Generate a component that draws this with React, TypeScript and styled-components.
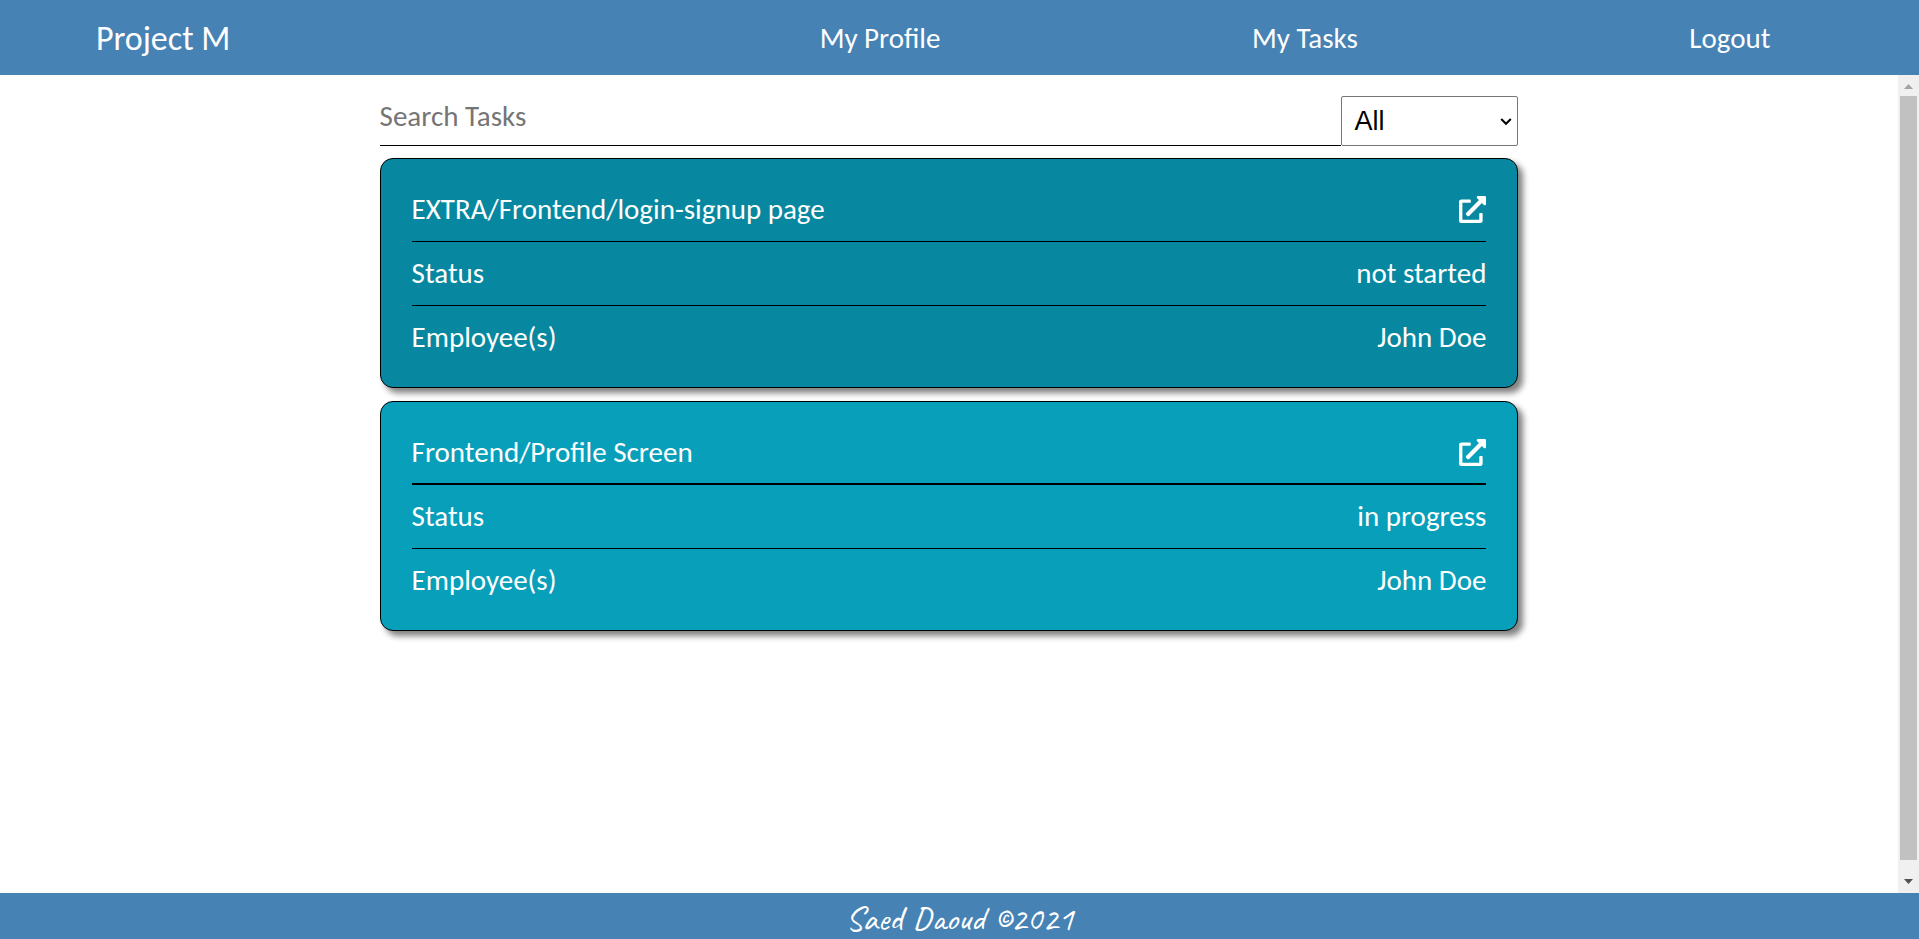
import React from 'react';
import styled, { createGlobalStyle } from 'styled-components';
import { FaExternalLinkAlt } from 'react-icons/fa';

const GlobalStyle = createGlobalStyle`
  *, *::before, *::after { box-sizing: border-box; }
  body {
    margin: 0;
    font-family: "Carlito", "Lato", sans-serif;
    font-size: 29px;
    background: #fff;
  }
`;

const Page = styled.div`
  display: flex;
  flex-direction: column;
  height: 100vh;
`;

const Header = styled.header`
  display: flex;
  flex: none;
  align-items: center;
  justify-content: space-between;
  height: 75px;
  padding: 0 5%;
  background: steelblue;
  color: #fff;
`;

const Brand = styled.a`
  padding-top: 2px;
  color: inherit;
  font-size: 34px;
  line-height: 40px;
  text-decoration: none;
`;

const NavList = styled.ul`
  display: flex;
  justify-content: space-between;
  width: 60%;
  margin: 0;
  padding: 0;
  list-style: none;
`;

const NavItem = styled.li`
  width: 18%;
  text-align: center;
`;

const NavLink = styled.a`
  color: inherit;
  line-height: 40px;
  text-decoration: none;
`;

const Body = styled.div`
  display: flex;
  flex: 1;
  min-height: 0;
`;

const Main = styled.main`
  flex: 1;
  padding-top: 21px;
  overflow: hidden;
`;

const Content = styled.div`
  width: 60%;
  margin: 0 auto;
`;

const SearchBar = styled.form`
  display: flex;
  height: 50px;
  margin-bottom: 12px;
`;

const SearchInput = styled.input`
  flex: 1;
  min-width: 0;
  padding: 0 0 10px;
  border: 0;
  border-bottom: 1px solid #000;
  outline: 0;
  background: transparent;
  font: inherit;

  &::placeholder { color: #757575; }
`;

const SelectWrap = styled.div`
  position: relative;
  display: flex;
  flex: none;
  width: 177px;
`;

const StatusSelect = styled.select`
  flex: 1;
  padding: 0 0 0 12px;
  appearance: none;
  border: 1px solid #767676;
  border-radius: 2px;
  background: #fff;
  color: #000;
  font-family: "Liberation Sans", Arial, sans-serif;
  font-size: 27px;
`;

const SelectChevron = styled.svg`
  position: absolute;
  top: 21px;
  right: 6px;
  width: 12px;
  height: 9px;
  pointer-events: none;
`;

const TaskList = styled.div`
  display: flex;
  flex-direction: column;
  gap: 13px;
`;

const Card = styled.article<{ $color: string }>`
  padding: 31px 31px 30px;
  border: 1px solid #000;
  border-radius: 13px;
  background: ${(p) => p.$color};
  box-shadow: 5px 5px 6px gray;
  color: #fff;
`;

const Row = styled.div`
  display: flex;
  align-items: center;
  justify-content: space-between;
  line-height: 39px;
`;

const Title = styled.h2`
  margin: 0;
  font-size: inherit;
  font-weight: 400;
`;

const OpenLink = styled.a`
  display: flex;
  color: inherit;
  font-size: 27px;
`;

const Divider = styled.hr<{ $heavy?: boolean }>`
  height: ${(p) => (p.$heavy ? 2 : 1)}px;
  margin: ${(p) => (p.$heavy ? 11 : 12)}px 0 12px;
  border: 0;
  background: #000;
`;

const Scrollbar = styled.div`
  display: flex;
  flex: none;
  flex-direction: column;
  width: 21px;
  padding: 0 2px;
  background: #f0f0f0;
`;

const ScrollThumb = styled.div`
  flex: 1;
  margin-bottom: 12px;
  background: #c1c1c1;
`;

const ScrollArrow = styled.svg`
  flex: none;
  width: 17px;
  height: 21px;
`;

const Footer = styled.footer`
  flex: none;
  height: 46px;
  background: steelblue;
  color: #fff;
  font-family: "Caveat", "Lato", cursive;
  font-size: 35px;
  line-height: 52px;
  text-align: center;
`;

interface Task {
  title: string;
  status: string;
  employees: string;
  color: string;
  heavy?: boolean;
}

const tasks: Task[] = [
  {
    title: 'EXTRA/Frontend/login-signup page',
    status: 'not started',
    employees: 'John Doe',
    color: '#0788a0',
  },
  {
    title: 'Frontend/Profile Screen',
    status: 'in progress',
    employees: 'John Doe',
    color: '#089fba',
    heavy: true,
  },
];

function TaskCard({ task }: { task: Task }) {
  return (
    <Card $color={task.color}>
      <Row>
        <Title>{task.title}</Title>
        <OpenLink href="#task" aria-label={`Open ${task.title}`}>
          <FaExternalLinkAlt />
        </OpenLink>
      </Row>
      <Divider $heavy={task.heavy} />
      <Row>
        <span>Status</span>
        <span>{task.status}</span>
      </Row>
      <Divider />
      <Row>
        <span>Employee(s)</span>
        <span>{task.employees}</span>
      </Row>
    </Card>
  );
}

export default function App() {
  return (
    <Page>
      <GlobalStyle />
      <Header>
        <Brand href="#home">Project M</Brand>
        <NavList>
          <NavItem><NavLink href="#profile">My Profile</NavLink></NavItem>
          <NavItem><NavLink href="#tasks">My Tasks</NavLink></NavItem>
          <NavItem><NavLink href="#logout">Logout</NavLink></NavItem>
        </NavList>
      </Header>
      <Body>
        <Main>
          <Content>
            <SearchBar>
              <SearchInput type="text" placeholder="Search Tasks" aria-label="Search Tasks" />
              <SelectWrap>
                <StatusSelect aria-label="Filter by status" defaultValue="all">
                  <option value="all">All</option>
                  <option value="not started">not started</option>
                  <option value="in progress">in progress</option>
                </StatusSelect>
                <SelectChevron viewBox="0 0 12 9" aria-hidden="true">
                  <path d="M1.200 2L6 6.800L10.800 2" fill="none" stroke="#000" strokeWidth="2" />
                </SelectChevron>
              </SelectWrap>
            </SearchBar>
            <TaskList>
              {tasks.map((task) => <TaskCard key={task.title} task={task} />)}
            </TaskList>
          </Content>
        </Main>
        <Scrollbar aria-hidden="true">
          <ScrollArrow viewBox="0 0 17 21"><path d="M4 14h9L8.500 9z" fill="#a3a3a3" /></ScrollArrow>
          <ScrollThumb />
          <ScrollArrow viewBox="0 0 17 21"><path d="M4 7h9L8.500 12z" fill="#505050" /></ScrollArrow>
        </Scrollbar>
      </Body>
      <Footer>Saed Daoud ©2021</Footer>
    </Page>
  );
}
